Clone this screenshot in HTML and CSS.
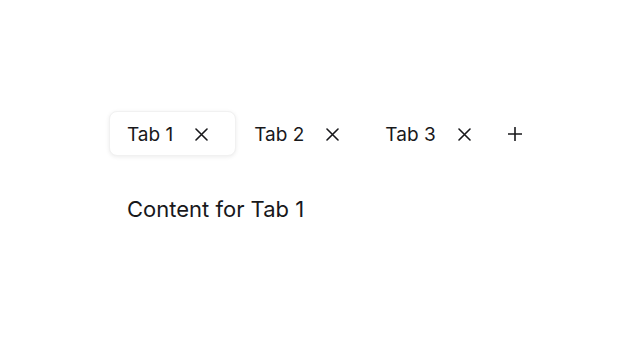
FILE: index.html
```html
<!DOCTYPE html>
<html lang="en">
<head>
<meta charset="utf-8">
<title>Tabs</title>
<link rel="stylesheet" href="styles.css">
</head>
<body>
<div class="app">
  <div class="tabbar">
    <div class="tab active">
      <span class="tab-label">Tab 1</span>
      <span class="close"><svg viewBox="0 0 13 13" width="13" height="13"><path d="M1 1L12 12M12 1L1 12"/></svg></span>
    </div>
    <div class="tab">
      <span class="tab-label">Tab 2</span>
      <span class="close"><svg viewBox="0 0 13 13" width="13" height="13"><path d="M1 1L12 12M12 1L1 12"/></svg></span>
    </div>
    <div class="tab">
      <span class="tab-label">Tab 3</span>
      <span class="close"><svg viewBox="0 0 13 13" width="13" height="13"><path d="M1 1L12 12M12 1L1 12"/></svg></span>
    </div>
    <span class="add"><svg viewBox="0 0 14 14" width="14" height="14"><path d="M7 0.5V13.5M0.5 7H13.5"/></svg></span>
  </div>
  <div class="content">Content for Tab 1</div>
</div>
</body>
</html>
```
FILE: styles.css
```css
html, body {
  margin: 0;
  background: #ffffff;
}
body {
  font-family: Inter, "Noto Sans", sans-serif;
  color: #18181b;
}
.app {
  padding: 111px 0 0 109px;
}
.tabbar {
  display: flex;
  align-items: center;
}
.tab {
  box-sizing: border-box;
  height: 45px;
  display: flex;
  align-items: center;
  gap: 22px;
  padding: 1px 27px 0 17px;
  border-radius: 8px;
  border: 1px solid transparent;
}
.tab.active {
  background: #ffffff;
  border-color: #f1f1f1;
  box-shadow: 0 1px 4px rgba(0, 0, 0, 0.08);
}
.tab-label {
  font-size: 19px;
  line-height: 23px;
}
.close, .add {
  display: flex;
}
.close svg, .add svg {
  fill: none;
  stroke: #18181b;
  stroke-width: 1.6;
  stroke-linecap: round;
}
.add {
  margin-left: 9px;
  margin-top: 1px;
}
.content {
  margin-top: 40px;
  padding-left: 18px;
  font-size: 22px;
  line-height: 27px;
}
```
